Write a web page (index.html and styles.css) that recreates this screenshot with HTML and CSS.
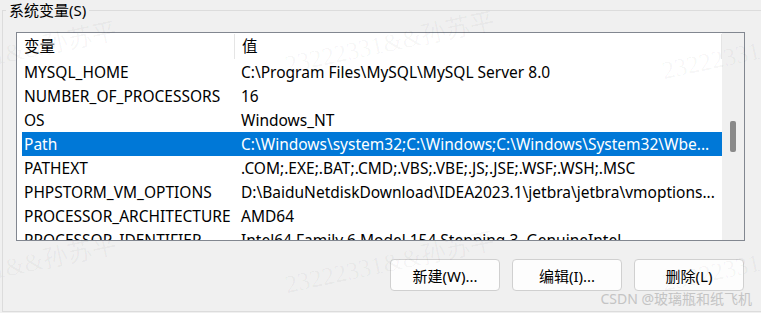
FILE: index.html
```html
<!DOCTYPE html>
<html lang="zh-CN">
<head>
    <meta charset="UTF-8">
    <meta name="viewport" content="width=device-width, initial-scale=1.0">
    <title>系统变量</title>
    <link rel="stylesheet" href="styles.css">
</head>
<body>

<div class="group">
    <div class="group-title">系统变量(S)</div>

    <!-- 变量列表 -->
    <div class="list">
        <div class="list-main">
            <div class="list-head">
                <div class="col col-name">变量</div>
                <div class="col col-value">值</div>
            </div>
            <div class="list-body">
                <div class="row"><div class="col col-name">MYSQL_HOME</div><div class="col col-value">C:\Program Files\MySQL\MySQL Server 8.0</div></div>
                <div class="row"><div class="col col-name">NUMBER_OF_PROCESSORS</div><div class="col col-value">16</div></div>
                <div class="row"><div class="col col-name">OS</div><div class="col col-value">Windows_NT</div></div>
                <div class="row selected"><div class="col col-name">Path</div><div class="col col-value">C:\Windows\system32;C:\Windows;C:\Windows\System32\Wbe...</div></div>
                <div class="row"><div class="col col-name">PATHEXT</div><div class="col col-value">.COM;.EXE;.BAT;.CMD;.VBS;.VBE;.JS;.JSE;.WSF;.WSH;.MSC</div></div>
                <div class="row"><div class="col col-name">PHPSTORM_VM_OPTIONS</div><div class="col col-value">D:\BaiduNetdiskDownload\IDEA2023.1\jetbra\jetbra\vmoptions...</div></div>
                <div class="row"><div class="col col-name">PROCESSOR_ARCHITECTURE</div><div class="col col-value">AMD64</div></div>
                <div class="row"><div class="col col-name">PROCESSOR_IDENTIFIER</div><div class="col col-value">Intel64 Family 6 Model 154 Stepping 3, GenuineIntel</div></div>
            </div>
        </div>
        <div class="scrollbar">
            <div class="thumb"></div>
        </div>
    </div>

    <!-- 按钮 -->
    <div class="actions">
        <button class="btn">新建(W)...</button>
        <button class="btn">编辑(I)...</button>
        <button class="btn">删除(L)</button>
    </div>
</div>

<!-- 水印 -->
<div class="mark mark-1">23222331&amp;&amp;孙苏平</div>
<div class="mark mark-2">23222331&amp;&amp;孙苏平</div>
<div class="mark mark-3">23222331&amp;&amp;孙苏平</div>
<div class="mark mark-4">23222331&amp;&amp;孙苏平</div>
<div class="mark mark-5">23222331&amp;&amp;孙苏平</div>
<div class="mark mark-6">23222331&amp;&amp;孙苏平</div>
<div class="csdn">CSDN @玻璃瓶和纸飞机</div>

</body>
</html>
```

FILE: styles.css
```css
body {
    margin: 0;
    background-color: #f0f0f0;
    color: #000;
    font-family: "Noto Sans", "Noto Sans CJK SC", sans-serif;
    font-size: 15.5px;
    width: 761px;
    height: 313px;
    overflow: hidden;
    position: relative;
}

.group {
    margin: 10px 0 0 2px;
    padding: 0 15px 0 13px;
    border: 1px solid #dcdcdc;
    border-right: none;
    height: 302px;
    box-sizing: border-box;
}

.group-title {
    display: table;
    margin: -11px 0 0 -10px;
    padding: 0 3px;
    line-height: 20px;
    font-size: 15px;
    background-color: #f0f0f0;
}

/* 列表 */
.list {
    display: flex;
    margin-top: 12px;
    width: 729px;
    height: 209px;
    box-sizing: border-box;
    border: 1px solid #828790;
    background-color: #fff;
    overflow: hidden;
}

.list-main {
    width: 705px;
}

.list-head {
    display: flex;
    height: 27px;
    align-items: center;
}

.list-head .col-name,
.list-head .col-value {
    border-right: 1px solid #e5e5e5;
    height: 25px;
    line-height: 25px;
}

.list-head .col-value {
    flex: 1;
}

.row {
    display: flex;
    height: 24px;
    line-height: 24px;
    margin-left: 5px;
}

.row.selected {
    background-color: #0078d7;
    color: #fff;
}

.col {
    white-space: nowrap;
    overflow: hidden;
}

.col-name {
    width: 210px;
    padding-left: 7px;
}

.col-value {
    width: 481px;
    padding-left: 7px;
}

.row .col-name {
    width: 210px;
    padding-left: 2px;
}

.scrollbar {
    width: 22px;
    background-color: #f0f0f0;
    position: relative;
}

.thumb {
    position: absolute;
    left: 8px;
    top: 88px;
    width: 6px;
    height: 31px;
    border-radius: 2px;
    background-color: #8a8a8a;
}

/* 按钮 */
.actions {
    display: flex;
    justify-content: flex-end;
    gap: 12px;
    width: 728px;
    margin-top: 18px;
}

.btn {
    width: 110px;
    height: 32px;
    background-color: #fdfdfd;
    border: 1px solid #d0d0d0;
    border-radius: 4px;
    font-family: inherit;
    font-size: 15px;
    color: #000;
}

/* 水印 */
.mark {
    position: absolute;
    width: 215px;
    font-family: "Liberation Serif", "Noto Sans CJK SC", serif;
    font-size: 25px;
    line-height: 30px;
    color: rgba(0, 0, 0, 0.04);
    transform: rotate(-12deg);
    white-space: nowrap;
    pointer-events: none;
}

.mark-1 { left: -95px; top: 38px; }
.mark-2 { left: 283px; top: 28px; }
.mark-3 { left: 660px; top: 34px; }
.mark-4 { left: -95px; top: 252px; }
.mark-5 { left: 283px; top: 248px; }
.mark-6 { left: 660px; top: 246px; }

.csdn {
    position: absolute;
    right: 9px;
    top: 288px;
    font-size: 14px;
    color: #c4c4c4;
    white-space: nowrap;
}
```
